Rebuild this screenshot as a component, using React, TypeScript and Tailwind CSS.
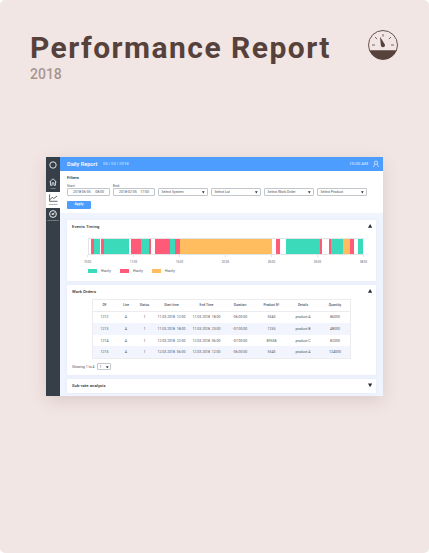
import React from "react";

const segments: [number, string][] = [
  [3, "bg-white"], [3, "bg-[#ff5b79]"], [6, "bg-[#3bdabb]"], [1, "bg-white"], [2.7, "bg-[#ff5b79]"],
  [25.3, "bg-[#3bdabb]"], [2, "bg-white"], [10, "bg-[#ff5b79]"], [8, "bg-[#3bdabb]"], [1.3, "bg-[#ff5b79]"],
  [4.7, "bg-white"], [15, "bg-[#ff5b79]"], [5, "bg-[#3bdabb]"], [5, "bg-[#ff5b79]"], [92, "bg-[#ffbd60]"],
  [4.5, "bg-white"], [4, "bg-[#ff5b79]"], [5.5, "bg-white"], [34, "bg-[#3bdabb]"], [2.5, "bg-[#ff5b79]"],
  [7.5, "bg-white"], [2, "bg-[#ff5b79]"], [11.5, "bg-[#3bdabb]"], [7.5, "bg-[#ffbd60]"], [4, "bg-[#ff5b79]"],
  [3.3, "bg-white"], [5.7, "bg-[#3bdabb]"],
];

const ticks = ["10:00", "11:00", "15:00", "02:00", "05:00", "05:00", "08:00"];

const headings = ["OF", "Line", "Status", "Start time", "End Time", "Duration", "Product N°", "Details", "Quantity"];

const rows = [
  ["1212", "A", "1", "11.03.2018  12:00", "11.03.2018  18:00", "-06:00:00", "5545", "product A", "86000"],
  ["1213", "A", "1", "11.03.2018  18:00", "11.03.2018  23:00", "-07:00:00", "1255", "product B", "48000"],
  ["1214", "A", "1", "12.03.2018  22:00", "12.03.2018  06:00", "-07:00:00", "89558", "product C", "82000"],
  ["1215", "A", "1", "12.03.2018  06:00", "12.03.2018  12:00", "-06:00:00", "5545", "product A", "124000"],
];

const columns = "grid grid-cols-[23px_20px_17px_37px_33px_34px_29px_34px_30px] items-center text-center whitespace-pre";

function Triangle({ up = false, small = false }: { up?: boolean; small?: boolean }) {
  return (
    <svg viewBox="0 0 10 10" className={small ? "size-[2.6px] shrink-0" : "mb-[2px] size-[4.2px] shrink-0"}>
      <path d={up ? "M5 0L10 9H0Z" : "M0 1H10L5 10Z"} fill="#222b36" />
    </svg>
  );
}

function Gauge() {
  return (
    <svg viewBox="0 0 30 30" className="size-[30px]" fill="none" stroke="#57413b">
      <circle cx="15" cy="15" r="14.5" strokeWidth="0.9" />
      <path d="M1.4 20.3H28.6A14.6 14.6 0 0 1 1.4 20.3Z" fill="#57413b" stroke="none" />
      <path d="M4 15h3M23 15h3M15 4v2.6M7 7l2.1 2.1M23 7l-2.1 2.1" strokeWidth="0.8" />
      <path d="M12 6.8L16.9 14.4A2 2 0 1 1 12.9 15.8Z" fill="#57413b" stroke="none" />
    </svg>
  );
}

function Sidebar() {
  return (
    <nav className="flex w-[14px] shrink-0 flex-col items-center bg-[#363e48] text-[2px] leading-[2px] text-[#c9cdd2]">
      <div className="flex h-[19px] w-full items-start justify-center pt-[4px]">
        <svg viewBox="0 0 8 8" className="size-[8px]" fill="none" stroke="#f5f5f5">
          <circle cx="4" cy="4" r="3.2" strokeWidth="0.9" />
        </svg>
      </div>
      <div className="flex h-[16px] w-full flex-col items-center pt-[2px]">
        <svg viewBox="0 0 8 8" className="size-[8px]" fill="none" stroke="white" strokeWidth="0.75">
          <path d="M.5 4L4 .8L7.5 4M1.5 3.3V7.3H3.1V4.8H4.9V7.3H6.5V3.3" />
        </svg>
        <span className="mt-[1px]">Home</span>
      </div>
      <div className="flex h-[16px] w-full flex-col items-center bg-white pt-[2px] text-[#363e48]">
        <svg viewBox="0 0 9 8" className="h-[8px] w-[9px]" fill="none" stroke="#363e48" strokeWidth="0.75">
          <path d="M.6 .3V7.3H8.5M1.3 5.6L3.2 3.3L4.8 4.5L8 2" />
        </svg>
        <span className="mt-[1px]">Reporting</span>
      </div>
      <div className="flex h-[16px] w-full flex-col items-center pt-[2px]">
        <svg viewBox="0 0 8 8" className="size-[8px]" fill="none" stroke="white">
          <circle cx="4" cy="4" r="3.4" strokeWidth="0.9" />
          <path d="M3.8 4.2L5.6 2.3M1.9 4h.8M5.6 4h.7" strokeWidth="0.7" />
          <circle cx="3.9" cy="4.1" r="0.9" fill="white" stroke="none" />
        </svg>
        <span className="mt-[1px] whitespace-nowrap">Performance</span>
      </div>
    </nav>
  );
}

const box = "flex h-[8px] items-center rounded-[1px] border border-[#c3c6ca] bg-white";

function Select({ label }: { label: string }) {
  return (
    <div className={`${box} w-[50px] justify-between pr-[2px] pl-[2.5px]`}>
      <span>{label}</span>
      <Triangle small />
    </div>
  );
}

function DateField({ label, date, time, width }: { label: string; date: string; time: string; width: string }) {
  return (
    <div className={width}>
      <div className="h-[4px] leading-[4px]">{label}</div>
      <div className={`${box} justify-between pr-[5px] pl-[5px]`}>
        <span>{date}</span>
        <span>{time}</span>
      </div>
    </div>
  );
}

function Filters() {
  return (
    <section className="h-[42px] bg-white pt-[4px] pl-[7px] text-[3.5px] text-[#4b535e]">
      <h3 className="h-[5px] text-[4.3px] leading-[5px] font-medium text-[#222b36]">Filters</h3>
      <div className="mt-[4.4px] flex items-end gap-[3px]">
        <DateField label="Start:" date="2018-06-05" time="08:00" width="w-[43px]" />
        <DateField label="End:" date="2018-02-05" time="17:00" width="w-[42px]" />
        <Select label="Select System" />
        <Select label="Select Lot" />
        <Select label="Select Work Order" />
        <Select label="Select Product" />
      </div>
      <button className="mt-[4.2px] flex h-[8px] w-[24px] items-center justify-center rounded-[1px] bg-[#4d9dff] text-[3.5px] font-medium text-white">
        Apply
      </button>
    </section>
  );
}

function CardTitle({ children, up }: { children: React.ReactNode; up?: boolean }) {
  return (
    <div className="flex h-[14px] items-center justify-between pr-[4px] pl-[5px]">
      <h3 className="text-[4.2px] leading-[6px] font-medium tracking-[0.08px] text-[#222b36]">{children}</h3>
      <Triangle up={up} />
    </div>
  );
}

function EventsTiming() {
  return (
    <section className="h-[61px] rounded-[1px] bg-white shadow-[0_0_4px_#e3eafa]">
      <CardTitle up>Events Timing</CardTitle>
      <div className="mt-[4px] ml-[20.5px] flex h-[17px] w-[276px] border-y border-l border-[#e3e4e6]">
        {segments.map(([width, color], i) => (
          <span key={i} className={`h-full ${color}`} style={{ width: `${(width / 276) * 100}%` }} />
        ))}
      </div>
      <div className="ml-[10.5px] flex w-[296px] justify-between text-[2.8px] leading-[4px] text-[#565d66]">
        {ticks.map((tick, i) => (
          <span key={i} className="flex w-[20px] flex-col items-center">
            <i className="mb-[2px] h-[2px] w-px bg-[#e3e4e6]" />
            <span className="mt-[0.8px]">{tick}</span>
          </span>
        ))}
      </div>
      <div className="mt-[5.2px] ml-[21px] flex text-[3.4px] leading-[4px] text-[#4b535e]">
        {["bg-[#3bdabb]", "bg-[#ff5b79]", "bg-[#ffbd60]"].map((color) => (
          <span key={color} className="flex w-[32px] items-center gap-[4px]">
            <i className={`h-[4px] w-[9px] ${color}`} />
            Hourly
          </span>
        ))}
      </div>
    </section>
  );
}

function WorkOrders() {
  return (
    <section className="mt-[4px] h-[90px] rounded-[1px] bg-white shadow-[0_0_4px_#e3eafa]">
      <CardTitle up>Work Orders</CardTitle>
      <div className="ml-[25px] w-[259px] border border-[#ececef] text-[3.5px] leading-[4px] text-[#4b535e]">
        <div className={`${columns} h-[11.6px] border-b border-[#ececef] text-[3.3px] font-medium`}>
          {headings.map((heading) => (
            <span key={heading}>{heading}</span>
          ))}
        </div>
        {rows.map((row, i) => (
          <div key={i} className={`${columns} h-[11.6px] ${i % 2 ? "bg-[#f2f5fe]" : "bg-white"}`}>
            {row.map((cell, j) => (
              <span key={j}>{cell}</span>
            ))}
          </div>
        ))}
      </div>
      <div className="mt-[4.4px] ml-[5px] flex items-center gap-[3px] text-[3.4px] leading-[4px] text-[#4b535e]">
        <span className="w-[22px] whitespace-nowrap">Showing 1 to 4</span>
        <div className="flex h-[7px] w-[14px] items-center justify-between rounded-[1px] border border-[#c3c6ca] px-[1.5px]">
          1
          <Triangle small />
        </div>
      </div>
    </section>
  );
}

export default function App() {
  return (
    <div className="h-[553px] w-[429px] bg-white font-[Roboto,sans-serif]">
      <div className="h-full overflow-hidden rounded-[5px] bg-[#f2e6e5]">
        <header className="flex h-[157px] items-start justify-between pr-[31px] pl-[30px]">
          <div className="pt-[30px] text-[#57413b]">
            <h1 className="text-[30px] leading-[36px] font-bold tracking-[1.47px] whitespace-nowrap">Performance Report</h1>
            <p className="text-[14px] leading-[16px] font-medium text-[#a8958f]">2018</p>
          </div>
          <div className="pt-[30px]">
            <Gauge />
          </div>
        </header>
        <main className="ml-[46px] flex h-[239px] w-[337px] bg-[#f0f4fd] shadow-[0_5px_16px_rgba(80,45,45,0.14)]">
          <Sidebar />
          <div className="min-w-0 flex-1">
            <div className="flex h-[14px] items-center bg-[#4d9dff] pr-[4px] pl-[7px] text-white">
              <h2 className="text-[5.6px] font-medium">Daily Report</h2>
              <span className="ml-[5.5px] text-[4.2px] tracking-[0.05px] text-[#d9eaff]">05 | 03 | 2018</span>
              <span className="ml-auto text-[4.4px] text-[#e4f0ff]">10:00 AM</span>
              <svg viewBox="0 0 7 8" className="ml-[5px] h-[8px] w-[6px]" fill="none" stroke="white" strokeWidth="0.7">
                <circle cx="3.5" cy="2.6" r="2" />
                <path d="M.6 7.6Q.8 5.2 2.5 4.5M6.4 7.6Q6.2 5.2 4.5 4.5" />
              </svg>
            </div>
            <Filters />
            <div className="px-[7px] pt-[7px]">
              <EventsTiming />
              <WorkOrders />
              <section className="mt-[4px] rounded-[1px] bg-white shadow-[0_0_4px_#e3eafa]">
                <CardTitle>Sub-rate analysis</CardTitle>
              </section>
            </div>
          </div>
        </main>
      </div>
    </div>
  );
}
